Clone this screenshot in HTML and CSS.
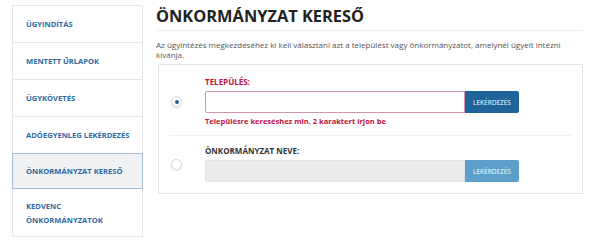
FILE: index.html
```html
<!DOCTYPE html>
<html lang="hu">
<head>
    <meta charset="UTF-8">
    <title>Önkormányzat kereső</title>
    <link rel="stylesheet" href="styles.css">
</head>
<body>
    <div class="page">
        <ul class="side-menu">
            <li><a href="#">Ügyindítás</a></li>
            <li><a href="#">Mentett űrlapok</a></li>
            <li><a href="#">Ügykövetés</a></li>
            <li><a href="#">Adóegyenleg lekérdezés</a></li>
            <li class="active"><a href="#">Önkormányzat kereső</a></li>
            <li class="tall"><a href="#">Kedvenc<br>önkormányzatok</a></li>
        </ul>

        <div class="main">
            <h1>Önkormányzat kereső</h1>
            <p class="intro">Az ügyintézés megkezdéséhez ki kell választani azt a települést vagy önkormányzatot, amelynél ügyeit intézni kívánja.</p>

            <div class="card">
                <div class="search-row first">
                    <span class="radio checked"></span>
                    <div class="field">
                        <label class="field-label error">Település:</label>
                        <div class="input-group">
                            <input type="text" class="text-input invalid">
                            <button class="btn">Lekérdezés</button>
                        </div>
                        <div class="error-text">Településre kereséshez min. 2 karaktert írjon be</div>
                    </div>
                </div>
                <div class="divider"></div>
                <div class="search-row">
                    <span class="radio"></span>
                    <div class="field">
                        <label class="field-label">Önkormányzat neve:</label>
                        <div class="input-group">
                            <input type="text" class="text-input" disabled>
                            <button class="btn" disabled>Lekérdezés</button>
                        </div>
                    </div>
                </div>
            </div>
        </div>
    </div>
</body>
</html>
```

FILE: styles.css
```css
body {
    margin: 0;
    font-family: "Open Sans", Arial, sans-serif;
    color: #333;
    background: #fff;
}

.page {
    display: flex;
    align-items: flex-start;
    padding: 5px 0 0 12px;
}

.side-menu {
    list-style: none;
    margin: 0;
    padding: 0;
    width: 129px;
    border: 1px solid #e6e6e6;
}

.side-menu li {
    height: 36px;
    display: flex;
    align-items: center;
    padding: 0 2px 0 13px;
    border-bottom: 1px solid #e6e6e6;
}

.side-menu li:last-child {
    border-bottom: none;
}

.side-menu li.tall {
    height: 47px;
}

.side-menu li.active {
    background: #f0f1f3;
    border: 1px solid #a9bccf;
    margin: -1px -1px 0 -1px;
    height: 34px;
}

.side-menu a {
    color: #2b6aa3;
    font-size: 7.6px;
    font-weight: 700;
    line-height: 14px;
    text-transform: uppercase;
    text-decoration: none;
    white-space: nowrap;
}

.main {
    width: 427px;
    margin-left: 13px;
}

h1 {
    margin: 0;
    padding: 0 0 3px;
    font-size: 16.4px;
    line-height: 22px;
    font-weight: 700;
    text-transform: uppercase;
    color: #222;
    border-bottom: 1px solid #eee;
}

.intro {
    margin: 9px 0 0;
    font-size: 8px;
    line-height: 10px;
    color: #555;
}

.card {
    margin: 4px 0 0 2px;
    border: 1px solid #e6e6e6;
    width: 423px;
}

.search-row {
    display: flex;
    align-items: center;
    padding: 10px 0 11px;
}

.search-row.first {
    padding: 12px 0 9px;
}

.radio {
    box-sizing: border-box;
    width: 11px;
    height: 11px;
    margin: 0 23px 0 12px;
    border: 1px solid #d8d8d8;
    border-radius: 50%;
    box-shadow: 0 1px 2px rgba(0, 0, 0, 0.12);
    display: flex;
    align-items: center;
    justify-content: center;
    flex-shrink: 0;
}

.radio.checked::after {
    content: "";
    width: 4px;
    height: 4px;
    border-radius: 50%;
    background: #1e5d8c;
}

.field-label {
    display: block;
    font-size: 8px;
    line-height: 10px;
    font-weight: 700;
    text-transform: uppercase;
    color: #333;
    margin-bottom: 4px;
}

.field-label.error {
    color: #c4113f;
}

.input-group {
    display: flex;
}

.text-input {
    box-sizing: border-box;
    width: 260px;
    height: 22px;
    margin: 0;
    border: 1px solid #e5e5e5;
    border-radius: 2px 0 0 2px;
    background: #fff;
    font-family: inherit;
}

.text-input.invalid {
    border-color: #d495a8;
}

.text-input:disabled {
    background: #ebebeb;
    border-color: #e3e3e3;
}

.btn {
    width: 54px;
    height: 22px;
    border: none;
    border-radius: 0 2px 2px 0;
    background: #1f639b;
    color: #fff;
    font-family: inherit;
    font-size: 6.5px;
    text-transform: uppercase;
    padding: 0;
}

.btn:disabled {
    background: #5c9fca;
}

.error-text {
    margin-top: 3px;
    font-size: 7.5px;
    line-height: 10px;
    font-weight: 700;
    color: #c4113f;
}

.divider {
    height: 1px;
    margin: 0 11px 0 10px;
    background: #efefef;
}
```
